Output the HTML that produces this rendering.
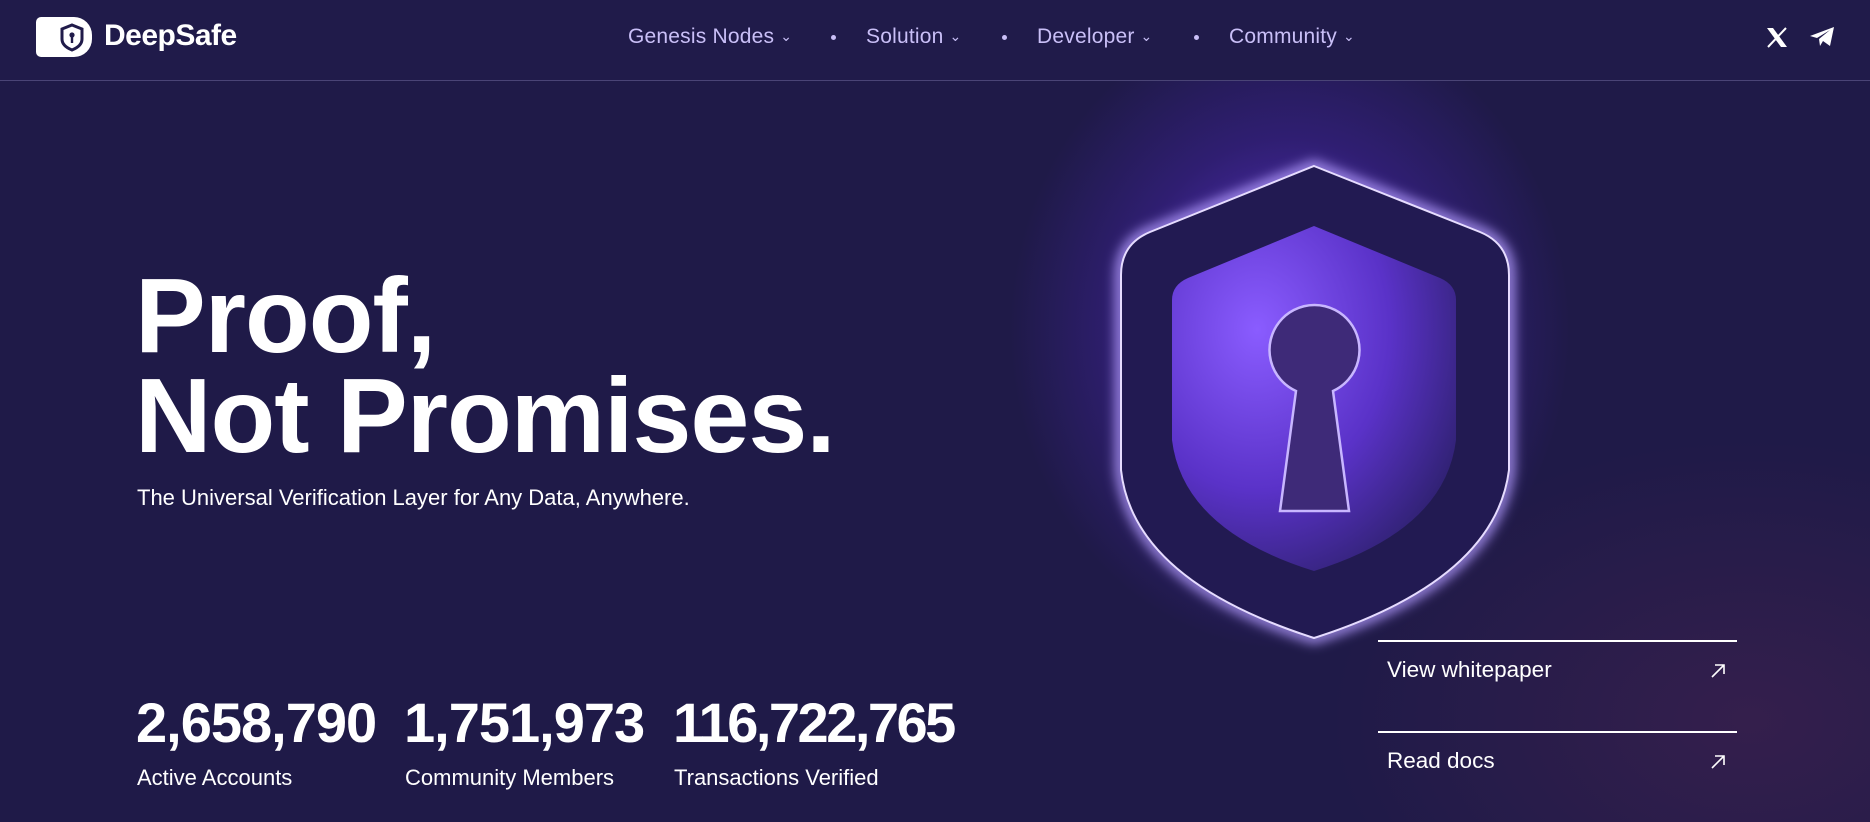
<!DOCTYPE html>
<html><head><meta charset="utf-8"><style>
*{margin:0;padding:0;box-sizing:border-box}
body{width:1870px;height:822px;overflow:hidden;background:#1f1a48;font-family:"Liberation Sans",sans-serif;color:#fff;position:relative}
.bg{position:absolute;inset:0;background:radial-gradient(ellipse 280px 320px at 1290px 330px,rgba(115,60,255,.75),rgba(85,40,210,.3) 60%,transparent 100%),radial-gradient(ellipse 600px 400px at 1750px 720px,rgba(70,35,80,.55),transparent 70%)}
.nav{position:absolute;left:0;top:0;width:1870px;height:81px;border-bottom:1px solid #4a4476;background:#201b4a}
.logo{position:absolute;left:36px;top:17px;width:56px;height:40px;background:#fff;border-radius:5px 18px 18px 5px}
.brand{position:absolute;left:104px;top:19px;font-size:30px;font-weight:bold;letter-spacing:-.5px}
.menu{position:absolute;top:25px;font-size:21px;color:#c9bff7;letter-spacing:.2px}
.menu small{font-size:14px;margin-left:6px;vertical-align:2px}
.dot{position:absolute;top:35px;width:5px;height:5px;border-radius:50%;background:#c9bff7}
h1{position:absolute;left:135px;top:266px;font-size:106px;line-height:100px;font-weight:bold;letter-spacing:-1px}
.sub{position:absolute;left:137px;top:485px;font-size:22px}
.num{position:absolute;top:690px;font-size:56px;font-weight:bold;letter-spacing:-1px}
.lab{position:absolute;top:765px;font-size:22px}
.ln{position:absolute;left:1378px;width:359px;height:1.5px;background:#fff}
.lk{position:absolute;left:1387px;font-size:22.5px}
.ar{position:absolute;left:1710px}
</style></head><body>
<div class="bg"></div>
<div class="nav">
<div class="logo"><svg width="56" height="40" viewBox="0 0 56 40"><path d="M36 8 L46 12 L46 22 Q46 29 36 33 Q26 29 26 22 L26 12 Z" fill="none" stroke="#201b4a" stroke-width="3"/><circle cx="36" cy="18" r="2.6" fill="#201b4a"/><rect x="34.8" y="19" width="2.4" height="7" fill="#201b4a"/></svg></div>
<div class="brand">DeepSafe</div>
<div class="menu" style="left:628px">Genesis Nodes<small>⌄</small></div>
<div class="dot" style="left:831px"></div>
<div class="menu" style="left:866px">Solution<small>⌄</small></div>
<div class="dot" style="left:1002px"></div>
<div class="menu" style="left:1037px">Developer<small>⌄</small></div>
<div class="dot" style="left:1194px"></div>
<div class="menu" style="left:1229px">Community<small>⌄</small></div>
<svg style="position:absolute;left:1766px;top:27px" width="22" height="21" viewBox="0 0 22 21"><path d="M1 1 L7 1 L21 20 L15 20 Z" fill="#fff"/><path d="M20 1 L2 20" stroke="#fff" stroke-width="2"/></svg>
<svg style="position:absolute;left:1810px;top:27px" width="25" height="20" viewBox="0 0 25 20"><path d="M0 9 L24 0 L20 19 L13 14 L10 19 L9 12 L20 3 L7 11 Z" fill="#fff"/></svg>
</div>
<svg style="position:absolute;left:1090px;top:140px" width="450" height="520" viewBox="1090 140 450 520">
<defs><radialGradient id="g" cx="0.3" cy="0.3" r="0.85"><stop offset="0" stop-color="#8a5cff"/><stop offset="0.55" stop-color="#5a32c8"/><stop offset="1" stop-color="#2a1f66"/></radialGradient>
<filter id="f"><feGaussianBlur stdDeviation="6"/></filter></defs>
<path d="M1314 166 L1480 232 Q1509 244 1509 275 L1509 470 Q1495 580 1314 638 Q1133 580 1121 470 L1121 275 Q1121 244 1150 232 Z" fill="none" stroke="#b49cff" stroke-width="10" filter="url(#f)"/>
<path d="M1314 166 L1480 232 Q1509 244 1509 275 L1509 470 Q1495 580 1314 638 Q1133 580 1121 470 L1121 275 Q1121 244 1150 232 Z" fill="#221a52" stroke="#e6dcff" stroke-width="2"/>
<path d="M1314 226 L1440 278 Q1456 285 1456 300 L1456 440 Q1445 530 1314 571 Q1183 530 1172 440 L1172 300 Q1172 285 1188 278 Z" fill="url(#g)"/>
<path d="M1296 391 A45 45 0 1 1 1333 391 L1349 511 L1280 511 Z" fill="#3e2a78" stroke="#c8b6ff" stroke-width="2.5"/>
</svg>
<h1>Proof,<br>Not Promises.</h1>
<div class="sub">The Universal Verification Layer for Any Data, Anywhere.</div>
<div class="num" style="left:136px">2,658,790</div>
<div class="num" style="left:404px">1,751,973</div>
<div class="num" style="left:673px;letter-spacing:-2.5px">116,722,765</div>
<div class="lab" style="left:137px">Active Accounts</div>
<div class="lab" style="left:405px">Community Members</div>
<div class="lab" style="left:674px">Transactions Verified</div>
<div class="ln" style="top:640px"></div>
<div class="lk" style="top:657px">View whitepaper</div>
<div class="ln" style="top:731px"></div>
<div class="lk" style="top:748px">Read docs</div>
<svg class="ar" style="top:663px" width="16" height="16" viewBox="0 0 16 16"><path d="M2 14 L14 2 M5 2 H14 V11" stroke="#fff" stroke-width="1.6" fill="none"/></svg>
<svg class="ar" style="top:754px" width="16" height="16" viewBox="0 0 16 16"><path d="M2 14 L14 2 M5 2 H14 V11" stroke="#fff" stroke-width="1.6" fill="none"/></svg>
</body></html>
